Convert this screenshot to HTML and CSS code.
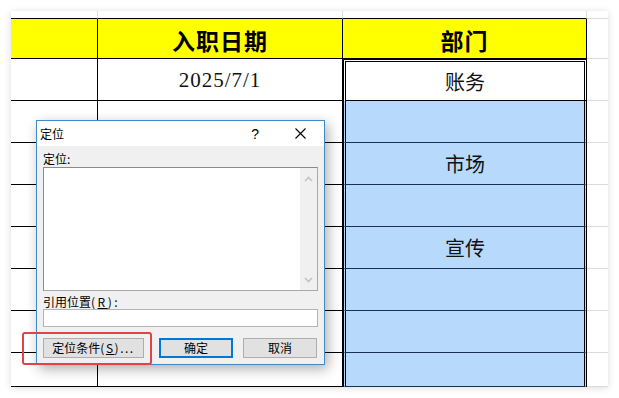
FILE: index.html
```html
<!DOCTYPE html>
<html>
<head>
	<meta charset="utf-8">
	<title>定位</title>
	<link rel="stylesheet" href="styles.css">
</head>
<body>
	<div class="sheet">
		<!-- 顶部残行 -->
		<div class="cell top"></div>
		<div class="cell top"></div>
		<div class="cell top"></div>
		<div class="cell top edge"></div>
		<!-- 表头 -->
		<div class="cell line head"></div>
		<div class="cell line head">入职日期</div>
		<div class="cell line head">部门</div>
		<div class="cell edge"></div>
		<!-- 数据行 -->
		<div class="cell line"></div>
		<div class="cell line date">2025/7/1</div>
		<div class="cell sel active">账务</div>
		<div class="cell edge"></div>

		<div class="cell line"></div>
		<div class="cell line"></div>
		<div class="cell sel"></div>
		<div class="cell edge"></div>

		<div class="cell line"></div>
		<div class="cell line"></div>
		<div class="cell sel">市场</div>
		<div class="cell edge"></div>

		<div class="cell line"></div>
		<div class="cell line"></div>
		<div class="cell sel"></div>
		<div class="cell edge"></div>

		<div class="cell line"></div>
		<div class="cell line"></div>
		<div class="cell sel">宣传</div>
		<div class="cell edge"></div>

		<div class="cell line"></div>
		<div class="cell line"></div>
		<div class="cell sel"></div>
		<div class="cell edge"></div>

		<div class="cell line"></div>
		<div class="cell line"></div>
		<div class="cell sel"></div>
		<div class="cell edge"></div>

		<div class="cell line"></div>
		<div class="cell line"></div>
		<div class="cell sel"></div>
		<div class="cell edge"></div>

		<div class="cell line last"></div>
		<div class="cell line last"></div>
		<div class="cell sel last"></div>
		<div class="cell edge last"></div>
	</div>

	<div class="dialog">
		<div class="title">
			<span class="title-text">定位</span>
			<span class="help">?</span>
			<svg class="close" width="11" height="11" viewBox="0 0 11 11">
				<path d="M0.5 0.5L10.5 10.5M10.5 0.5L0.5 10.5" stroke="#000" stroke-width="1.1" fill="none"/>
			</svg>
		</div>
		<div class="body">
			<div class="label first">定位:</div>
			<div class="listbox">
				<div class="scroll">
					<svg width="9" height="6" viewBox="0 0 9 6"><path d="M1 5L4.5 1.5L8 5" stroke="#c4c4c4" stroke-width="1.6" fill="none"/></svg>
					<svg width="9" height="6" viewBox="0 0 9 6"><path d="M1 1L4.5 4.5L8 1" stroke="#c4c4c4" stroke-width="1.6" fill="none"/></svg>
				</div>
			</div>
			<div class="label">引用位置<span class="key">(<u>R</u>):</span></div>
			<div class="input"></div>
			<div class="buttons">
				<button class="btn wide">定位条件<span class="key">(<u>S</u>)...</span></button>
				<button class="btn ok">确定</button>
				<button class="btn cancel">取消</button>
			</div>
		</div>
	</div>

	<div class="mark"></div>
</body>
</html>
```

FILE: styles.css
```css
*{
	box-sizing: border-box;
}
body{
	margin: 0;
	width: 619px;
	height: 398px;
	background-color: #fff;
	font-family: "Noto Sans CJK SC", sans-serif;
	position: relative;
	overflow: hidden;
}
.sheet{
	display: grid;
	grid-template-columns: 87px 245px 244px 21px;
	grid-template-rows: 8px 40px repeat(7, 42px) 34px;
	width: 597px;
	height: 376px;
	margin: 11px;
	background-color: #fff;
	box-shadow: 0 1px 7px rgba(0,0,0,0.14);
	overflow: hidden;
}
.cell{
	display: flex;
	align-items: center;
	justify-content: center;
	color: #111;
	font-size: 20px;
}
.top{
	border-right: 1px solid #dcdcdc;
	border-bottom: 1px solid #000;
}
.top.edge{
	border-right: none;
	border-bottom: 1px solid #dcdcdc;
}
.line{
	border-right: 1px solid #000;
	border-bottom: 1px solid #000;
}
.last{
	border-bottom: none;
}
.head{
	background-color: #ffff00;
	font-weight: 700;
	font-size: 23px;
	letter-spacing: 1px;
	padding-top: 3px;
	color: #000;
}
.date{
	font-family: "Liberation Serif", serif;
	font-size: 21px;
	letter-spacing: 1px;
	padding-top: 2px;
}
.edge{
	border-bottom: 1px solid #dcdcdc;
}
.sel{
	background-color: #b7d9fb;
	border-left: 3px double #000;
	border-right: 3px double #000;
	border-bottom: 1px solid #1b3050;
}
.sel.last{
	border-bottom: none;
}
.sel.active{
	background-color: #fff;
	border-top: 3px double #000;
	border-bottom: 1px solid #000;
}

/* 定位对话框 */
.dialog{
	position: absolute;
	left: 36px;
	top: 120px;
	width: 289px;
	height: 245px;
	border: 1px solid #3f8ac9;
	background-color: #f0f0f0;
	box-shadow: 3px 4px 12px rgba(0,0,0,0.32);
	font-size: 12px;
	color: #000;
}
.title{
	display: flex;
	align-items: center;
	height: 25px;
	background-color: #fff;
	padding-left: 3px;
}
.title-text{
	font-size: 12px;
	flex: 1;
}
.help{
	font-family: "Liberation Sans", sans-serif;
	font-size: 14px;
	margin-right: 36px;
}
.close{
	margin-right: 18px;
}
.body{
	padding: 0 6px;
}
.label{
	line-height: 15px;
	margin-top: 3px;
	height: 15px;
}
.label.first{
	margin-top: 5px;
	line-height: 16px;
	height: 16px;
}
.key{
	letter-spacing: 2.5px;
}
.listbox{
	display: flex;
	justify-content: flex-end;
	height: 124px;
	background-color: #fff;
	border: 1px solid #8b8b8b;
	border-right-color: #a8a8a8;
	border-bottom-color: #a8a8a8;
}
.scroll{
	display: flex;
	flex-direction: column;
	justify-content: space-between;
	align-items: center;
	width: 17px;
	padding: 8px 0 7px;
	background-color: #f0f0f0;
}
.input{
	height: 18px;
	background-color: #fff;
	border: 1px solid #b4b4b4;
}
.buttons{
	display: flex;
	margin-top: 11px;
}
.btn{
	height: 20px;
	padding: 0;
	font-family: "Noto Sans CJK SC", sans-serif;
	font-size: 12px;
	line-height: 16px;
	color: #000;
	background-color: #e1e1e1;
	border: 1px solid #adadad;
}
.btn.wide{
	width: 101px;
}
.btn.wide .key{
	letter-spacing: 1.5px;
}
.btn.ok{
	width: 74px;
	margin-left: 15px;
	border: 2px solid #0078d7;
}
.btn.cancel{
	width: 74px;
	margin-left: 10px;
}

/* 红色标注框 */
.mark{
	position: absolute;
	left: 22px;
	top: 332px;
	width: 130px;
	height: 33px;
	border: 2px solid #e2434a;
	border-radius: 3px;
}
```
